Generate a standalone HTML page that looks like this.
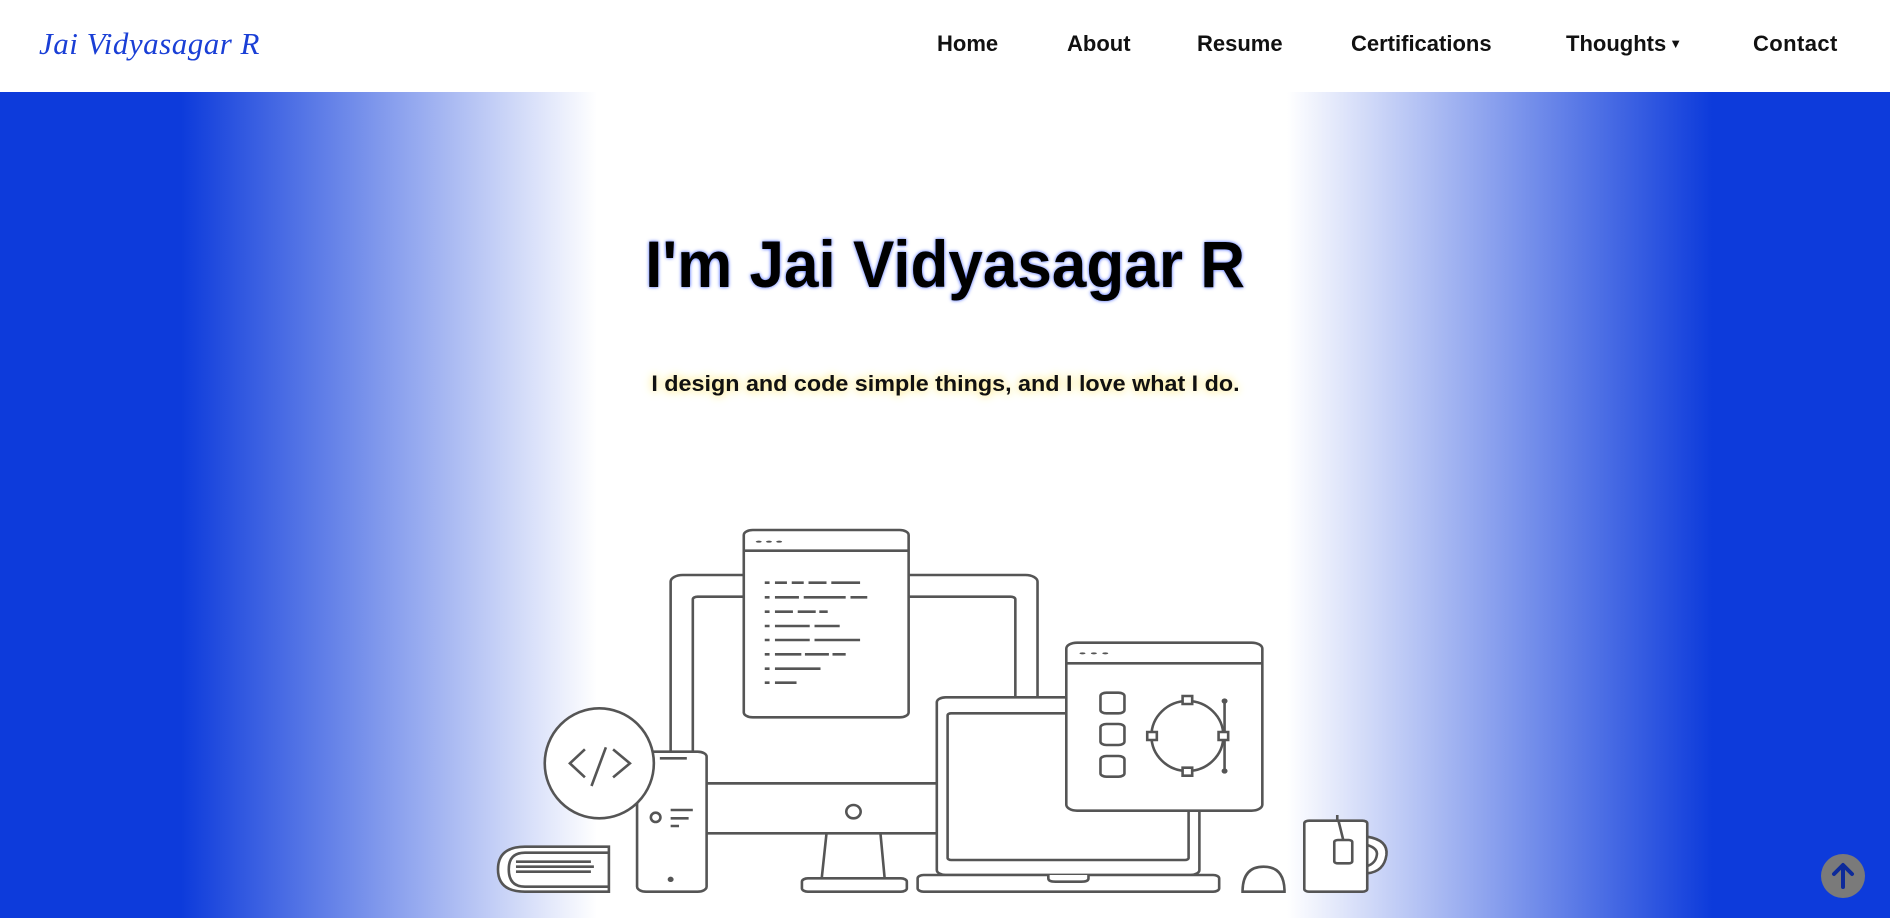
<!DOCTYPE html>
<html><head><meta charset="utf-8"><style>
html,body{margin:0;padding:0;width:1890px;height:918px;overflow:hidden;font-family:"Liberation Sans",sans-serif;}
nav{position:absolute;left:0;top:0;width:1890px;height:92px;background:#fff;}
.logo{position:absolute;left:39px;top:26px;font-family:"Liberation Serif",serif;font-style:italic;font-size:31px;color:#1a3fd6;letter-spacing:0.5px;}
.nav a{position:absolute;top:31px;font-size:22px;font-weight:bold;color:#111;text-decoration:none;}
.hero{position:absolute;left:0;top:92px;width:1890px;height:826px;background:linear-gradient(to right,#0d3bdb 0px,#0d3bdb 181px,#fff 597px,#fff 1287px,#0d3bdb 1712px,#0d3bdb 1890px);}
h1{position:absolute;left:0;width:1890px;top:226px;margin:0;text-align:center;font-size:66px;font-weight:bold;color:#000;text-shadow:0 0 4px #3a5bff;}
h1 span{display:inline-block;transform:scaleX(0.94);}
.sub{position:absolute;left:0;width:1890px;top:371px;text-align:center;font-size:22px;font-weight:bold;color:#111;text-shadow:0 0 8px #ffe98a,0 0 12px #fff2b0;}
.sub span{display:inline-block;transform:scaleX(1.06);}
svg.ill{position:absolute;left:480px;top:500px;}
.top{position:absolute;left:1821px;top:854px;width:44px;height:44px;border-radius:50%;background:#7a7a7a;}
</style></head><body>
<div class="hero"></div>
<nav><div class="logo">Jai Vidyasagar R</div>
<div class="nav">
<a style="left:937px">Home</a><a style="left:1067px">About</a><a style="left:1197px">Resume</a><a style="left:1351px">Certifications</a><a style="left:1566px">Thoughts<span style="font-size:13px;vertical-align:3px;margin-left:3px">▼</span></a><a style="left:1753px;letter-spacing:0.4px">Contact</a>
</div></nav>
<h1><span>I'm Jai Vidyasagar R</span></h1>
<div class="sub"><span>I design and code simple things, and I love what I do.</span></div>
<svg class="ill" width="940" height="418" viewBox="0 0 1568 1254" preserveAspectRatio="none">
<g fill="#fff" stroke="#555" stroke-width="2.6">
<rect x="318" y="225" width="612" height="775" rx="20" vector-effect="non-scaling-stroke"/>
<rect x="355" y="290" width="538" height="560" rx="8" vector-effect="non-scaling-stroke"/>
<line x1="318" y1="850" x2="930" y2="850" vector-effect="non-scaling-stroke"/>
<ellipse cx="623" cy="935" rx="12" ry="20" vector-effect="non-scaling-stroke"/>
<path d="M578 1000 L570 1135 M668 1000 L675 1135" vector-effect="non-scaling-stroke"/>
<rect x="537" y="1135" width="175" height="40" rx="10" vector-effect="non-scaling-stroke"/>
<rect x="440" y="90" width="275" height="562" rx="15" vector-effect="non-scaling-stroke"/>
<line x1="440" y1="152" x2="715" y2="152" vector-effect="non-scaling-stroke"/>
<rect x="762" y="592" width="438" height="533" rx="15" vector-effect="non-scaling-stroke"/>
<rect x="780" y="640" width="402" height="440" rx="6" vector-effect="non-scaling-stroke"/>
<rect x="730" y="1125" width="503" height="50" rx="10" vector-effect="non-scaling-stroke"/>
<path d="M948 1125 L948 1135 Q948 1145 960 1145 L1003 1145 Q1015 1145 1015 1135 L1015 1125" vector-effect="non-scaling-stroke"/>
<rect x="978" y="428" width="327" height="504" rx="18" vector-effect="non-scaling-stroke"/>
<line x1="978" y1="490" x2="1305" y2="490" vector-effect="non-scaling-stroke"/>
<rect x="1035" y="578" width="40" height="62" rx="10" vector-effect="non-scaling-stroke"/>
<rect x="1035" y="672" width="40" height="63" rx="10" vector-effect="non-scaling-stroke"/>
<rect x="1035" y="768" width="40" height="62" rx="10" vector-effect="non-scaling-stroke"/>
<ellipse cx="1180" cy="708" rx="60" ry="105" vector-effect="non-scaling-stroke"/>
<line x1="1242" y1="603" x2="1242" y2="813" vector-effect="non-scaling-stroke"/>
<rect x="1172" y="588" width="16" height="24" vector-effect="non-scaling-stroke"/>
<rect x="1113" y="696" width="16" height="24" vector-effect="non-scaling-stroke"/>
<rect x="1232" y="696" width="16" height="24" vector-effect="non-scaling-stroke"/>
<rect x="1172" y="803" width="16" height="24" vector-effect="non-scaling-stroke"/>
<rect x="262" y="755" width="116" height="420" rx="15" vector-effect="non-scaling-stroke"/>
<line x1="300" y1="775" x2="345" y2="775" vector-effect="non-scaling-stroke"/>
<ellipse cx="293" cy="952" rx="8" ry="14" vector-effect="non-scaling-stroke"/>
<path d="M318 930 H355 M318 955 H348 M318 978 H332" vector-effect="non-scaling-stroke"/>
<ellipse cx="199" cy="790" rx="91" ry="165" vector-effect="non-scaling-stroke"/>
<path d="M175 748 L150 790 L175 832 M210 742 L186 858 M222 748 L250 790 L222 832" fill="none" vector-effect="non-scaling-stroke"/>
<path d="M215 1040 H75 Q30 1040 30 1108 Q30 1175 75 1175 H215 Z" vector-effect="non-scaling-stroke"/>
<path d="M215 1058 H75 Q48 1058 48 1108 Q48 1160 75 1160 H215 M60 1085 H185 M60 1100 H190 M60 1115 H185" fill="none" vector-effect="non-scaling-stroke"/>
<path d="M1272 1175 Q1272 1100 1307 1100 Q1342 1100 1342 1175 Z" vector-effect="non-scaling-stroke"/>
<path d="M1480 1010 Q1515 1020 1512 1065 Q1508 1115 1480 1120" vector-effect="non-scaling-stroke"/>
<path d="M1480 1035 Q1498 1045 1496 1065 Q1494 1090 1480 1098" fill="none" vector-effect="non-scaling-stroke"/>
<rect x="1375" y="962" width="105" height="213" rx="8" vector-effect="non-scaling-stroke"/>
<path d="M1430 962 L1430 945 M1432 962 L1440 1020" fill="none" vector-effect="non-scaling-stroke"/>
<rect x="1425" y="1020" width="30" height="70" rx="6" vector-effect="non-scaling-stroke"/>
</g>
<g fill="#555">
<ellipse cx="465" cy="125" rx="5" ry="3"/><ellipse cx="482" cy="125" rx="5" ry="3"/><ellipse cx="499" cy="125" rx="5" ry="3"/>
<ellipse cx="1005" cy="460" rx="5" ry="3"/><ellipse cx="1024" cy="460" rx="5" ry="3"/><ellipse cx="1043" cy="460" rx="5" ry="3"/>
<ellipse cx="1242" cy="603" rx="5" ry="8"/><ellipse cx="1242" cy="813" rx="5" ry="8"/>
<ellipse cx="318" cy="1138" rx="5" ry="8"/>
</g>
<g stroke="#555" stroke-width="2.6">
<path d="M475 248h8M492 248h20M520 248h20M548 248h30M586 248h48
M475 292h8M492 292h40M540 292h70M618 292h28
M475 335h8M492 335h30M530 335h30M566 335h14
M475 378h8M492 378h58M558 378h42
M475 420h8M492 420h58M558 420h76
M475 463h8M492 463h44M542 463h40M588 463h22
M475 506h8M492 506h76
M475 548h8M492 548h36" vector-effect="non-scaling-stroke"/>
</g>
</svg>
<div class="top"><svg width="44" height="44" viewBox="0 0 44 44"><path d="M22 33V12M13 20l9-9 9 9" stroke="#0d2a9a" stroke-width="4" fill="none" stroke-linecap="round" stroke-linejoin="round"/></svg></div>
</body></html>
